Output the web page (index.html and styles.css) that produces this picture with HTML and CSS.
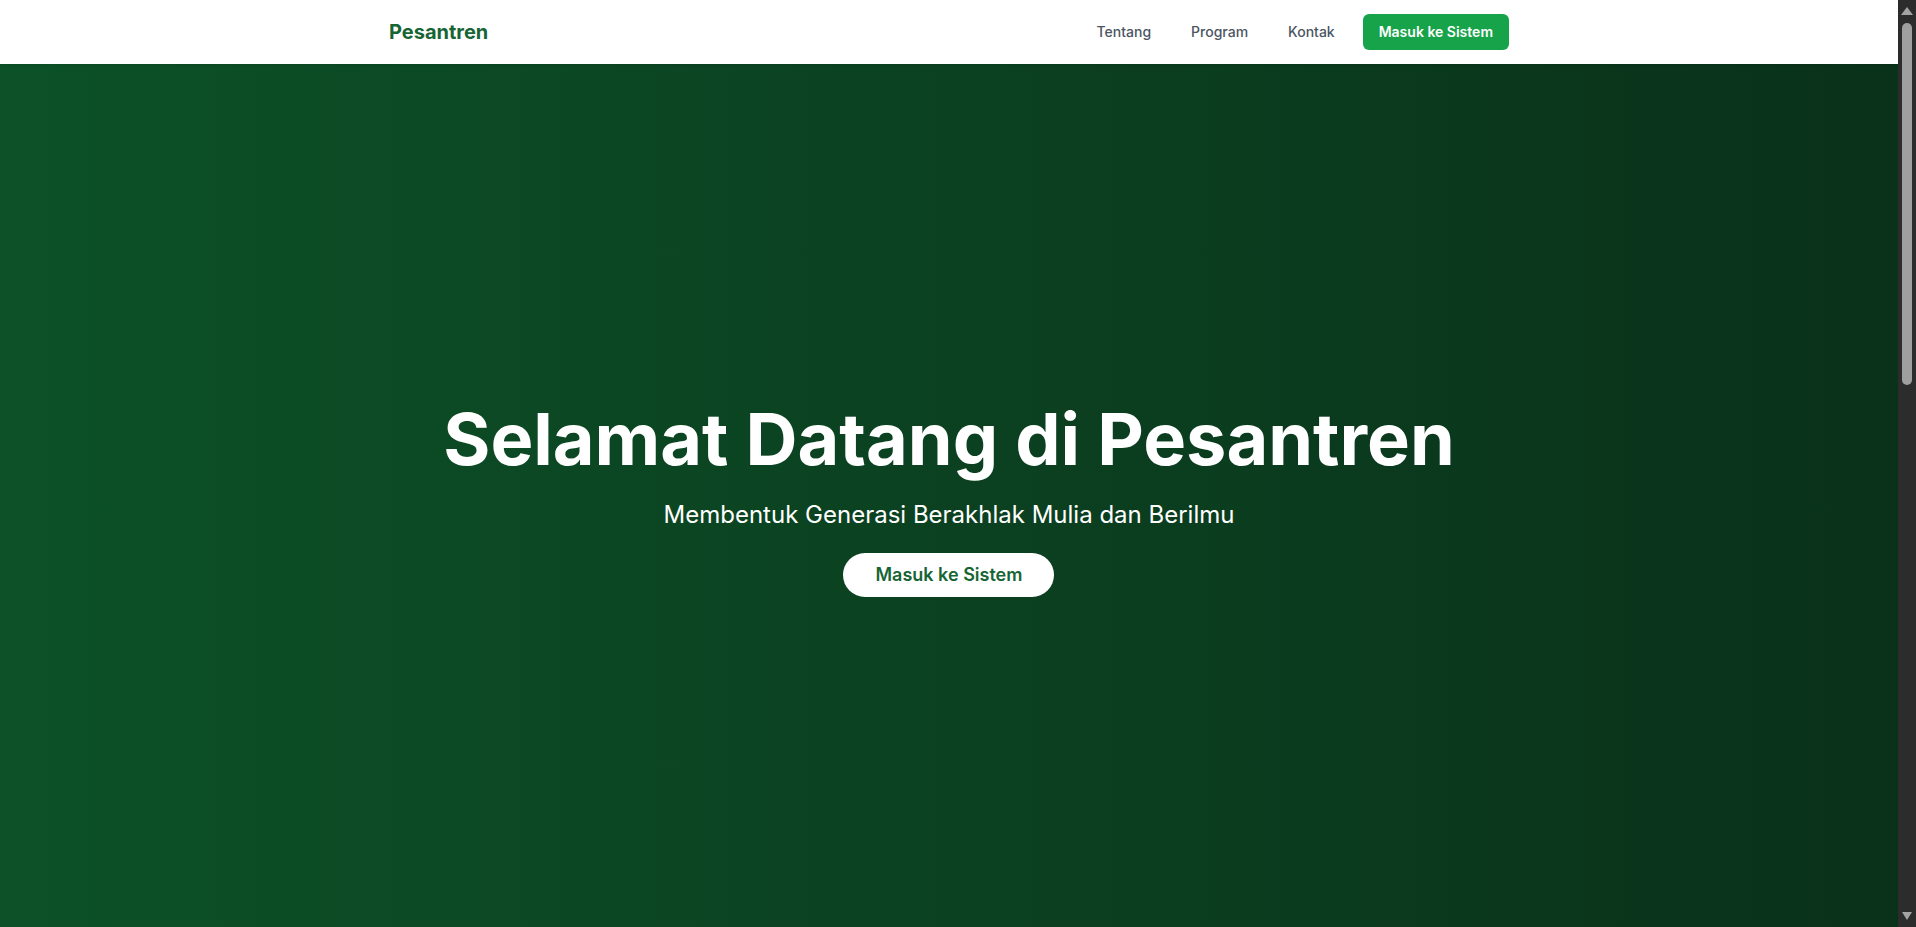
FILE: index.html
```html
<!DOCTYPE html>
<html lang="id">
<head>
<meta charset="utf-8">
<title>Pesantren</title>
<link rel="stylesheet" href="styles.css">
</head>
<body>
<div class="viewport">
  <div class="page">
    <header class="navbar">
      <div class="container nav-inner">
        <a class="brand" href="#">Pesantren</a>
        <nav class="nav-links">
          <a class="nav-link" href="#tentang">Tentang</a>
          <a class="nav-link" href="#program">Program</a>
          <a class="nav-link" href="#kontak">Kontak</a>
          <a class="nav-btn" href="#">Masuk ke Sistem</a>
        </nav>
      </div>
    </header>
    <main class="hero">
      <div class="hero-content">
        <h1 class="hero-title">Selamat Datang di Pesantren</h1>
        <p class="hero-sub">Membentuk Generasi Berakhlak Mulia dan Berilmu</p>
        <a class="hero-btn" href="#">Masuk ke Sistem</a>
      </div>
    </main>
  </div>
  <div class="scrollbar" aria-hidden="true">
    <svg class="sb-arrow" width="18" height="17" viewBox="0 0 18 17"><polygon points="3,15 15,15 9,7" fill="#a3a3a3"/></svg>
    <div class="sb-track">
      <div class="sb-thumb"></div>
    </div>
    <svg class="sb-arrow" width="18" height="17" viewBox="0 0 18 17"><polygon points="4,2 14,2 9,10" fill="#a3a3a3"/></svg>
  </div>
</div>
</body>
</html>
```
FILE: styles.css
```css
* { box-sizing: border-box; }
html, body { height: 100%; }
body {
  margin: 0;
  overflow: hidden;
  font-family: Inter, "Noto Sans", "Liberation Sans", sans-serif;
  background: #ffffff;
  color: #111827;
}
a { text-decoration: none; }
.viewport {
  display: flex;
  height: 100vh;
}
.page {
  flex: 1;
  display: flex;
  flex-direction: column;
  min-width: 0;
}
.container {
  width: 100%;
  max-width: 1152px;
  margin: 0 auto;
  padding: 0 16px;
}
.navbar {
  background: #ffffff;
  height: 64px;
  flex: none;
  box-shadow: 0 1px 3px rgba(0,0,0,0.1);
  position: relative;
  z-index: 2;
}
.nav-inner {
  height: 64px;
  display: flex;
  align-items: center;
  justify-content: space-between;
}
.brand {
  font-size: 20px;
  line-height: 28px;
  font-weight: 700;
  color: #166534;
}
.nav-links {
  display: flex;
  align-items: center;
  gap: 16px;
}
.nav-link {
  font-size: 14px;
  line-height: 20px;
  font-weight: 500;
  color: #4b5563;
  padding: 8px 12px;
}
.nav-btn {
  font-size: 14px;
  line-height: 20px;
  font-weight: 600;
  color: #ffffff;
  background: #16a34a;
  padding: 8px 16px;
  border-radius: 6px;
}
.hero {
  flex: 1;
  background: linear-gradient(to right, #0c5127, #0a311a);
  display: flex;
  align-items: center;
  justify-content: center;
  padding-top: 9px;
}
.hero-content {
  display: flex;
  flex-direction: column;
  align-items: center;
  text-align: center;
  color: #ffffff;
}
.hero-title {
  margin: 0 0 24px;
  font-size: 72px;
  line-height: 72px;
  font-weight: 700;
}
.hero-sub {
  margin: 0 0 22px;
  font-size: 24px;
  line-height: 32px;
  font-weight: 400;
}
.hero-btn {
  background: #ffffff;
  color: #166534;
  font-size: 18px;
  line-height: 28px;
  font-weight: 600;
  padding: 8px 32px;
  border-radius: 9999px;
}
.scrollbar {
  width: 18px;
  flex: none;
  background: #2c2c2c;
  display: flex;
  flex-direction: column;
}
.sb-arrow { display: block; flex: none; }
.sb-track {
  flex: 1;
  padding: 6px 4px 0;
}
.sb-thumb {
  width: 10px;
  height: 362px;
  background: #9f9f9f;
  border-radius: 5px;
}
```
